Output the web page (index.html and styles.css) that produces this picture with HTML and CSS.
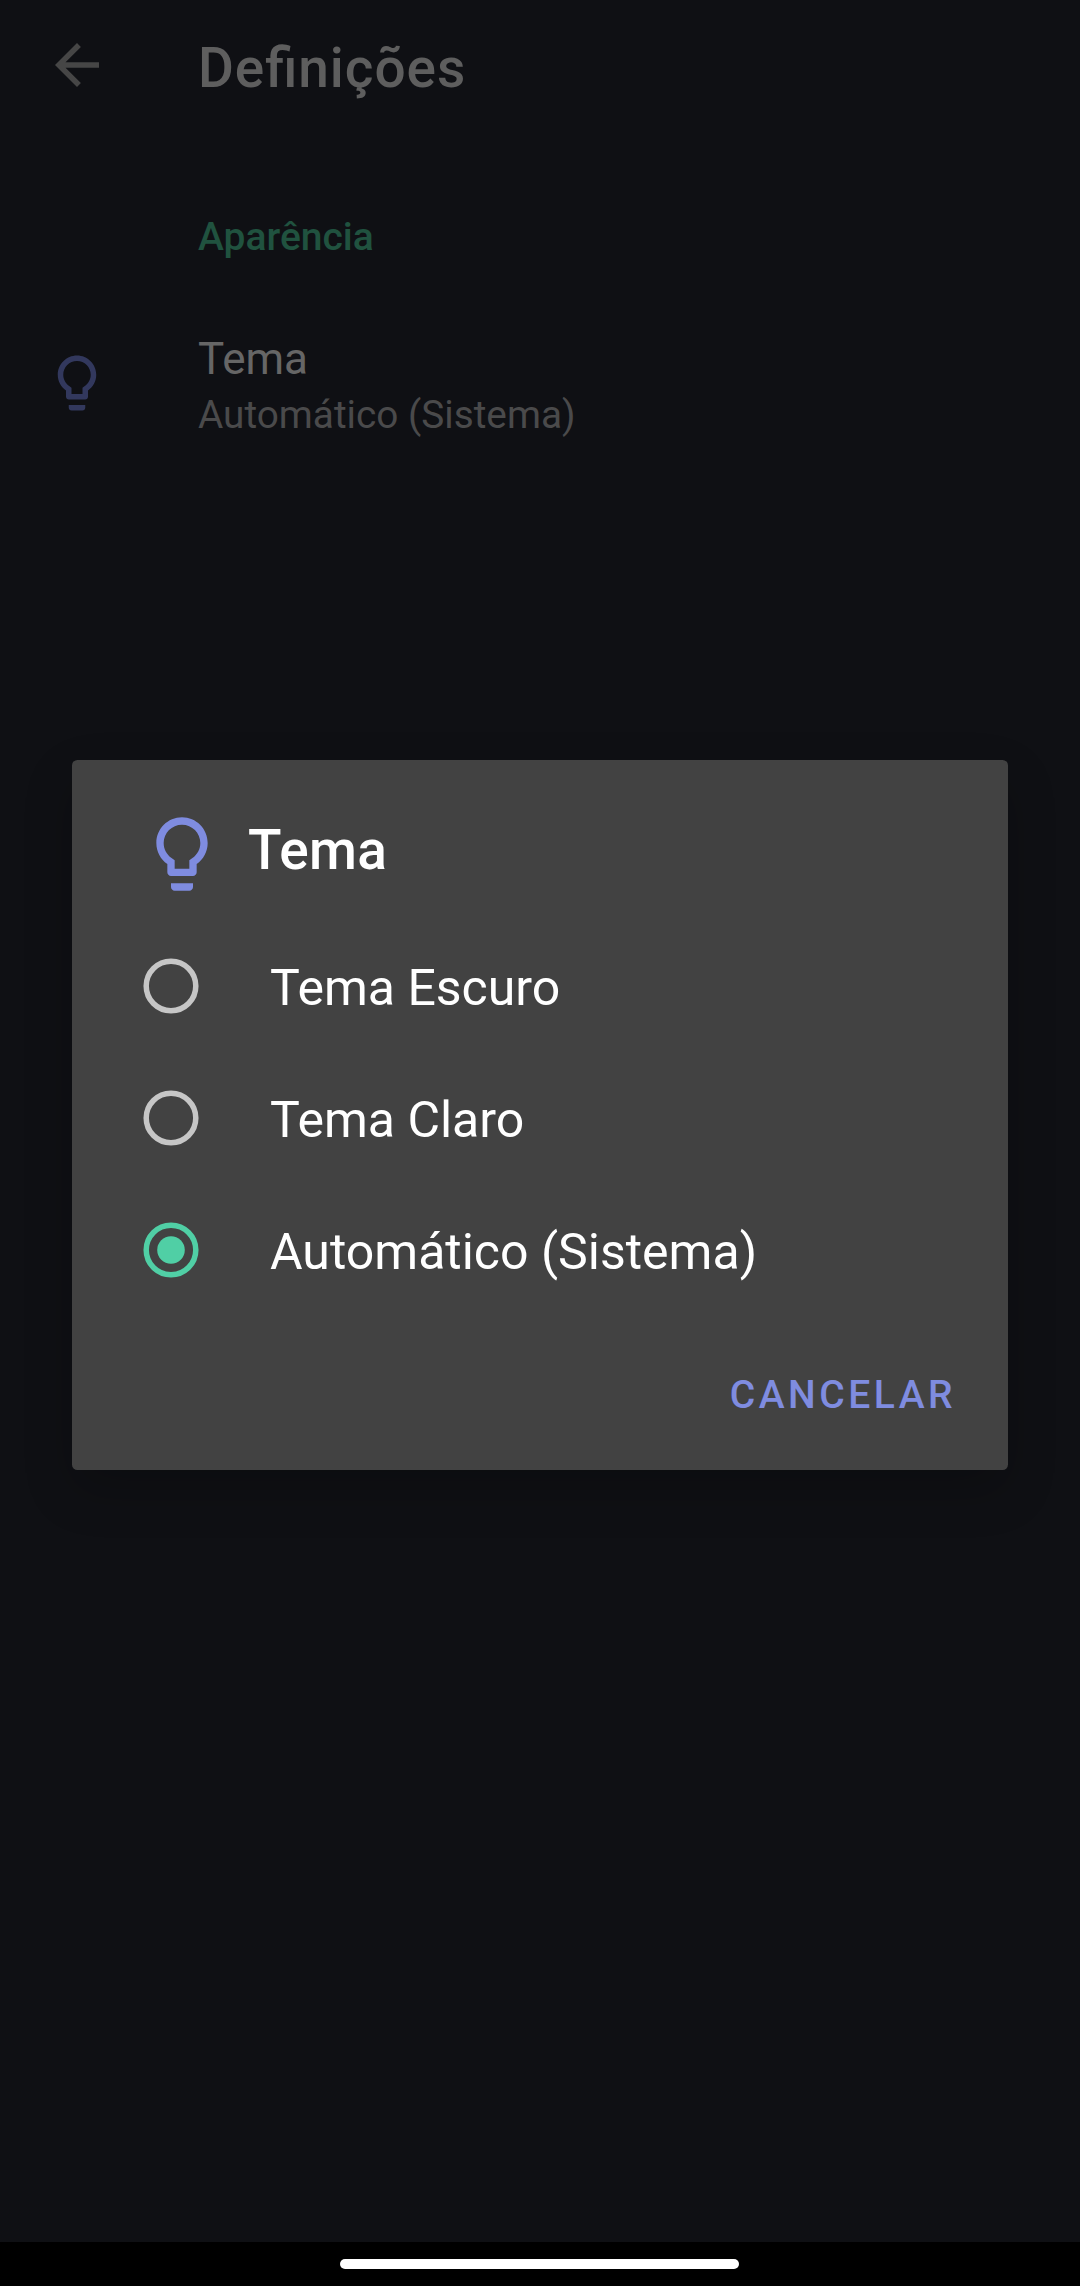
FILE: index.html
```html
<!DOCTYPE html>
<html lang="pt">
<head>
<meta charset="utf-8">
<title>Definições</title>
<link rel="stylesheet" href="styles.css">
</head>
<body>
<div class="screen">
  <header class="toolbar">
    <svg class="icon icon-back" viewBox="0 0 24 24"><path d="M20 11H7.83l5.59-5.59L12 4l-8 8 8 8 1.41-1.41L7.83 13H20v-2z"/></svg>
    <h1 class="toolbar-title">Definições</h1>
  </header>
  <main class="settings">
    <h2 class="category">Aparência</h2>
    <div class="preference">
      <svg class="icon icon-bulb" viewBox="0 0 24 24"><path d="M9 21c0 .55.45 1 1 1h4c.55 0 1-.45 1-1v-1H9v1zm3-19C8.14 2 5 5.14 5 9c0 2.38 1.19 4.47 3 5.74V17c0 .55.45 1 1 1h6c.55 0 1-.45 1-1v-2.26c1.81-1.27 3-3.36 3-5.74 0-3.86-3.14-7-7-7zm2.85 11.1l-.85.6V16h-4v-2.3l-.85-.6C7.8 12.16 7 10.63 7 9c0-2.76 2.24-5 5-5s5 2.24 5 5c0 1.63-.8 3.16-2.15 4.1z"/></svg>
      <div class="preference-text">
        <div class="preference-title">Tema</div>
        <div class="preference-summary">Automático (Sistema)</div>
      </div>
    </div>
  </main>
  <footer class="navbar"><div class="handle"></div></footer>
  <section class="dialog" role="dialog">
    <div class="dialog-header">
      <svg class="dialog-icon" viewBox="0 0 24 24"><path d="M9 21c0 .55.45 1 1 1h4c.55 0 1-.45 1-1v-1H9v1zm3-19C8.14 2 5 5.14 5 9c0 2.38 1.19 4.47 3 5.74V17c0 .55.45 1 1 1h6c.55 0 1-.45 1-1v-2.26c1.81-1.27 3-3.36 3-5.74 0-3.86-3.14-7-7-7zm2.85 11.1l-.85.6V16h-4v-2.3l-.85-.6C7.8 12.16 7 10.63 7 9c0-2.76 2.24-5 5-5s5 2.24 5 5c0 1.63-.8 3.16-2.15 4.1z"/></svg>
      <h2 class="dialog-title">Tema</h2>
    </div>
    <div class="option"><svg class="radio" viewBox="0 0 56 56"><circle class="ring" cx="28" cy="28" r="24.8"/></svg><span class="option-label">Tema Escuro</span></div>
    <div class="option"><svg class="radio" viewBox="0 0 56 56"><circle class="ring" cx="28" cy="28" r="24.8"/></svg><span class="option-label">Tema Claro</span></div>
    <div class="option"><svg class="radio radio-checked" viewBox="0 0 56 56"><circle class="ring" cx="28" cy="28" r="24.8"/><circle class="dot" cx="28" cy="28" r="13.8"/></svg><span class="option-label">Automático (Sistema)</span></div>
    <div class="actions"><span class="action">CANCELAR</span></div>
  </section>
</div>
</body>
</html>
```
FILE: styles.css
```css
* { box-sizing: border-box; }

body {
  margin: 0;
  background: #0f1014;
  font-family: Roboto, sans-serif;
}

h1, h2 { margin: 0; font-weight: 500; }

.screen {
  position: relative;
  display: flex;
  flex-direction: column;
  width: 1080px;
  height: 2286px;
  overflow: hidden;
}

.icon { width: 66px; height: 66px; flex: none; }
.icon-back { fill: #464646; }
.icon-bulb { margin-top: 17px; fill: #32385d; }

.toolbar {
  display: flex;
  gap: 88px;
  height: 154px;
  padding: 32px 44px 0;
}

.toolbar-title {
  padding-top: 3px;
  font-size: 55px;
  line-height: 66px;
  letter-spacing: 0.93px;
  font-feature-settings: "liga" 1;
  color: #5e5e5e;
}

.settings { flex: 1; padding: 60px 44px 0; }

.category {
  padding-left: 154px;
  font-size: 39px;
  line-height: 46px;
  color: #20523f;
}

.preference {
  display: flex;
  align-items: flex-start;
  gap: 88px;
  margin-top: 73px;
}

.preference-title {
  font-size: 44px;
  line-height: 52px;
  color: #666;
}

.preference-summary {
  margin-top: 7px;
  font-size: 38.75px;
  line-height: 46px;
  color: #4a4a4b;
}

.navbar {
  display: flex;
  align-items: center;
  justify-content: center;
  height: 44px;
  padding-right: 1px;
  background: #000;
}

.handle { width: 399px; height: 10px; border-radius: 5px; background: #fff; }

.dialog {
  position: absolute;
  left: 72px;
  top: 760px;
  width: 936px;
  height: 710px;
  border-radius: 5.5px;
  background: #424242;
  box-shadow: 0 20px 50px rgba(0, 0, 0, 0.2);
}

.dialog-header {
  display: flex;
  gap: 22px;
  height: 160px;
  padding: 50px 66px 0;
}

.dialog-icon { width: 88px; height: 88px; fill: #7f8ce0; }

.dialog-title {
  padding-top: 7px;
  font-size: 55px;
  line-height: 66px;
  letter-spacing: 0.3px;
  color: #fff;
}

.option {
  display: flex;
  align-items: center;
  gap: 71px;
  height: 132px;
  padding-left: 71px;
}

.radio { width: 56px; height: 56px; color: #c6c6c6; }
.radio-checked { color: #50cfa5; }
.ring { fill: none; stroke: currentColor; stroke-width: 5.5; }
.dot { fill: currentColor; }

.option-label {
  padding-top: 4px;
  font-size: 50px;
  line-height: 60px;
  color: #fff;
}

.actions { display: flex; justify-content: flex-end; padding: 56px 52px 0; }

.action {
  font-size: 39px;
  font-weight: 500;
  line-height: 46px;
  letter-spacing: 3.48px;
  color: #7f8ce0;
}
```
